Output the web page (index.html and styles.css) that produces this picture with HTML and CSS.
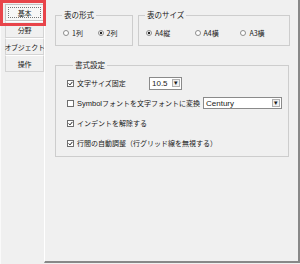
FILE: index.html
```html
<!DOCTYPE html>
<html lang="ja">
<head>
    <meta charset="UTF-8">
    <meta name="viewport" content="width=device-width, initial-scale=1.0">
    <title>設定</title>
    <link rel="stylesheet" href="styles.css">
</head>
<body>

    <div class="dialog">
        <div class="tabs">
            <div class="tab selected"><span class="focus">基本</span></div>
            <div class="tab">分野</div>
            <div class="tab">オブジェクト</div>
            <div class="tab">操作</div>
        </div>

        <div class="panel">
            <div class="top-row">
                <fieldset class="group group-format">
                    <legend>表の形式</legend>
                    <div class="radios">
                        <label class="opt">
                            <svg class="radio" width="6" height="6" viewBox="0 0 6 6"><circle cx="3" cy="3" r="2.5" fill="#fff" stroke="#8c8c8c"/></svg><span>1列</span>
                        </label>
                        <label class="opt">
                            <svg class="radio" width="6" height="6" viewBox="0 0 6 6"><circle cx="3" cy="3" r="2.5" fill="#fff" stroke="#8c8c8c"/><circle cx="3" cy="3" r="1.2" fill="#222"/></svg><span>2列</span>
                        </label>
                    </div>
                </fieldset>

                <fieldset class="group group-size">
                    <legend>表のサイズ</legend>
                    <div class="radios">
                        <label class="opt">
                            <svg class="radio" width="6" height="6" viewBox="0 0 6 6"><circle cx="3" cy="3" r="2.5" fill="#fff" stroke="#8c8c8c"/><circle cx="3" cy="3" r="1.2" fill="#222"/></svg><span>A4縦</span>
                        </label>
                        <label class="opt">
                            <svg class="radio" width="6" height="6" viewBox="0 0 6 6"><circle cx="3" cy="3" r="2.5" fill="#fff" stroke="#8c8c8c"/></svg><span>A4横</span>
                        </label>
                        <label class="opt">
                            <svg class="radio" width="6" height="6" viewBox="0 0 6 6"><circle cx="3" cy="3" r="2.5" fill="#fff" stroke="#8c8c8c"/></svg><span>A3横</span>
                        </label>
                    </div>
                </fieldset>
            </div>

            <fieldset class="group group-style">
                <legend>書式設定</legend>

                <div class="row">
                    <label class="check w-size">
                        <svg class="box" width="7" height="7" viewBox="0 0 7 7"><rect x="0.5" y="0.5" width="6" height="6" fill="#fff" stroke="#6e6e6e"/><polyline points="1.6,3.4 3,4.9 5.4,1.9" fill="none" stroke="#222" stroke-width="1"/></svg><span>文字サイズ固定</span>
                    </label>
                    <div class="select sel-size"><span>10.5</span><span class="arrow">▾</span></div>
                </div>

                <div class="row">
                    <label class="check w-font">
                        <svg class="box" width="7" height="7" viewBox="0 0 7 7"><rect x="0.5" y="0.5" width="6" height="6" fill="#fff" stroke="#6e6e6e"/></svg><span><span class="latin">Symbol</span>フォントを文字フォントに変換</span>
                    </label>
                    <div class="select sel-font"><span>Century</span><span class="arrow">▾</span></div>
                </div>

                <div class="row">
                    <label class="check">
                        <svg class="box" width="7" height="7" viewBox="0 0 7 7"><rect x="0.5" y="0.5" width="6" height="6" fill="#fff" stroke="#6e6e6e"/><polyline points="1.6,3.4 3,4.9 5.4,1.9" fill="none" stroke="#222" stroke-width="1"/></svg><span>インデントを解除する</span>
                    </label>
                </div>

                <div class="row">
                    <label class="check">
                        <svg class="box" width="7" height="7" viewBox="0 0 7 7"><rect x="0.5" y="0.5" width="6" height="6" fill="#fff" stroke="#6e6e6e"/><polyline points="1.6,3.4 3,4.9 5.4,1.9" fill="none" stroke="#222" stroke-width="1"/></svg><span>行間の自動調整（行グリッド線を無視する）</span>
                    </label>
                </div>
            </fieldset>
        </div>

        <div class="highlight"></div>
    </div>

</body>
</html>
```

FILE: styles.css
```css
body {
    margin: 0;
    padding: 0;
    background-color: #f0f0f0;
    font-family: "Noto Sans CJK JP", "Noto Sans", sans-serif;
    font-size: 7px;
    color: #1a1a1a;
}

.dialog {
    position: relative;
    display: flex;
    width: 300px;
    height: 264px;
}

.tabs {
    width: 44px;
    padding: 4px 0 0 4px;
    box-sizing: border-box;
    border-left: 1px solid #fafafa;
}

.tab {
    width: 39px;
    height: 17px;
    box-sizing: border-box;
    border: 1px solid #d4d4d4;
    border-top-color: #fff;
    display: flex;
    align-items: center;
    justify-content: center;
    padding-top: 1px;
    line-height: 10px;
    white-space: nowrap;
    letter-spacing: -0.3px;
}

.tab.selected {
    background-color: #f7f7f7;
    border: 1px solid #c4c4c4;
    padding: 2px;
}

.tab .focus {
    flex: 1;
    align-self: stretch;
    display: flex;
    align-items: center;
    justify-content: center;
    border: 1px dotted #777;
}

.panel {
    width: 256px;
    height: 263px;
    box-sizing: border-box;
    border-left: 1px solid #fff;
    border-right: 2px solid #888;
    border-bottom: 2px solid #888;
    padding: 10px 0 0 10px;
}

.top-row {
    display: flex;
    gap: 5px;
}

.group {
    margin: 0;
    padding: 0;
    min-width: 0;
    border: 1px solid #cdcdcd;
    box-sizing: border-box;
}

.group legend {
    margin-left: 6px;
    padding: 0 2px;
    line-height: 10px;
    font-size: 7.5px;
}

.group-format {
    width: 78px;
    height: 36px;
}

.group-size {
    width: 152px;
    height: 36px;
}

.radios {
    display: flex;
    padding: 8px 0 0 7px;
}

.opt {
    display: flex;
    align-items: center;
    gap: 3px;
    line-height: 10px;
}

.group-format .opt {
    width: 35px;
}

.group-size .opt {
    width: 52px;
}

.group-size .opt:nth-child(2) {
    width: 49px;
}

.group-style {
    width: 234px;
    height: 97px;
    margin-top: 14px;
    padding: 3px 0 0 11px;
}

.row {
    display: flex;
    align-items: center;
    height: 20px;
}

.check {
    display: flex;
    align-items: center;
    gap: 3px;
    line-height: 10px;
    white-space: nowrap;
}

.w-size {
    width: 82px;
}

.w-font {
    width: 136px;
}

.latin {
    font-family: "Liberation Sans", Arial, sans-serif;
    font-size: 7.5px;
}

.select {
    display: flex;
    align-items: center;
    justify-content: space-between;
    height: 12px;
    box-sizing: border-box;
    background-color: #fff;
    border: 1px solid #8a8a8a;
    padding-left: 2px;
    font-family: "Liberation Sans", Arial, sans-serif;
    font-size: 8px;
}

.sel-size {
    width: 33px;
    height: 13px;
}

.sel-font {
    width: 79px;
}

.arrow {
    width: 8px;
    height: 8px;
    margin-right: 1px;
    box-sizing: border-box;
    border: 1px solid #b0b0b0;
    background-color: #f0f0f0;
    font-size: 7px;
    line-height: 6px;
    text-align: center;
}

.highlight {
    position: absolute;
    left: 0;
    top: 0;
    width: 46px;
    height: 26px;
    box-sizing: border-box;
    border: 3px solid #e8444a;
}
```
